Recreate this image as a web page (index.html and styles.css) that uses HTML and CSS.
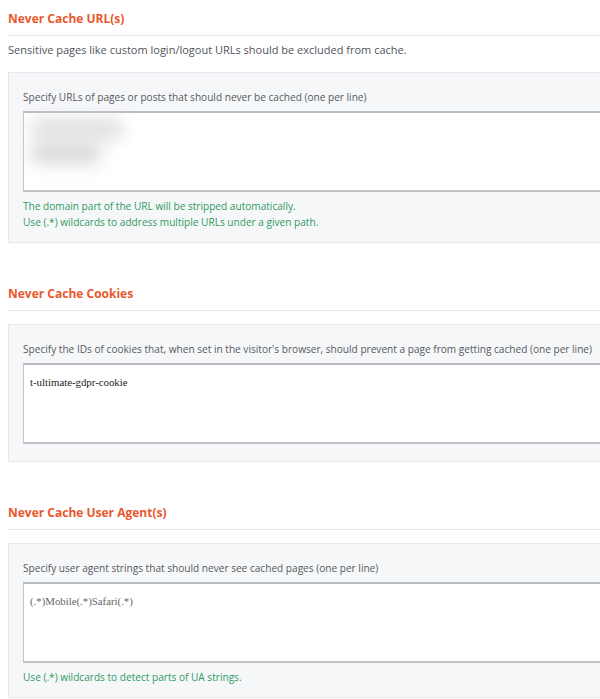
FILE: index.html
```html
<!DOCTYPE html>
<html>
<head>
<meta charset="utf-8">
<link rel="stylesheet" href="styles.css">
</head>
<body>
<div class="page">
  <section class="section">
    <h3 class="heading">Never Cache URL(s)</h3>
    <p class="desc">Sensitive pages like custom login/logout URLs should be excluded from cache.</p>
    <div class="box box-help">
      <label class="label">Specify URLs of pages or posts that should never be cached (one per line)</label>
      <div class="field"><span class="blurred blurred-a"></span><span class="blurred blurred-b"></span></div>
      <p class="help">The domain part of the URL will be stripped automatically.<br>Use (.*) wildcards to address multiple URLs under a given path.</p>
    </div>
  </section>
  <section class="section">
    <h3 class="heading">Never Cache Cookies</h3>
    <div class="box">
      <label class="label">Specify the IDs of cookies that, when set in the visitor's browser, should prevent a page from getting cached (one per line)</label>
      <div class="field"><span class="value">t-ultimate-gdpr-cookie</span></div>
    </div>
  </section>
  <section class="section">
    <h3 class="heading">Never Cache User Agent(s)</h3>
    <div class="box box-help">
      <label class="label">Specify user agent strings that should never see cached pages (one per line)</label>
      <div class="field"><span class="value value-muted">(.*)Mobile(.*)Safari(.*)</span></div>
      <p class="help">Use (.*) wildcards to detect parts of UA strings.</p>
    </div>
  </section>
</div>
</body>
</html>
```

FILE: styles.css
```css
html, body {
  margin: 0;
  padding: 0;
  background: #ffffff;
  overflow: hidden;
}
.page {
  width: 640px;
  padding-left: 8px;
  font-family: "Open Sans", "Noto Sans", sans-serif;
  color: #555a60;
}
.section + .section {
  margin-top: 32px;
}
.section:nth-child(3) {
  margin-top: 32px;
}
.heading {
  margin: 0;
  padding: 10px 0 7px;
  font-size: 12px;
  line-height: 18px;
  font-weight: 700;
  color: #e9582c;
  border-bottom: 1px solid #e3e5e8;
}
.desc {
  margin: 6px 0 0;
  font-size: 11px;
  line-height: 16px;
  color: #50555b;
}
.box {
  margin-top: 13px;
  background: #f6f7f9;
  border: 1px solid #e6e8eb;
  padding: 16px 14px 17px;
}
.section:first-child .box {
  margin-top: 14px;
}
.box-help {
  padding-bottom: 12px;
}
.label {
  display: block;
  font-size: 10.1px;
  line-height: 16px;
  color: #555a60;
}
.field {
  margin-top: 6px;
  background: #fff;
  border: 1px solid #c3c7cc;
  border-top: 2px solid #b9bdc2;
  border-bottom: 2px solid #bfc3c8;
  padding: 4px 6px;
  box-sizing: border-box;
  height: 81px;
}
.value {
  font-family: "Liberation Serif", "Times New Roman", serif;
  font-size: 10.8px;
  line-height: 16px;
  color: #222;
}
.value-muted {
  color: #666;
}
.blurred {
  display: block;
  background: #d4d4d4;
  border-radius: 12px;
  filter: blur(8px);
}
.blurred-a {
  width: 94px;
  height: 24px;
  opacity: 0.65;
}
.blurred-b {
  width: 72px;
  height: 24px;
  opacity: 0.8;
}
.help {
  margin: 6px 0 0;
  font-size: 10.1px;
  line-height: 16px;
  color: #2e9a5f;
}
```
